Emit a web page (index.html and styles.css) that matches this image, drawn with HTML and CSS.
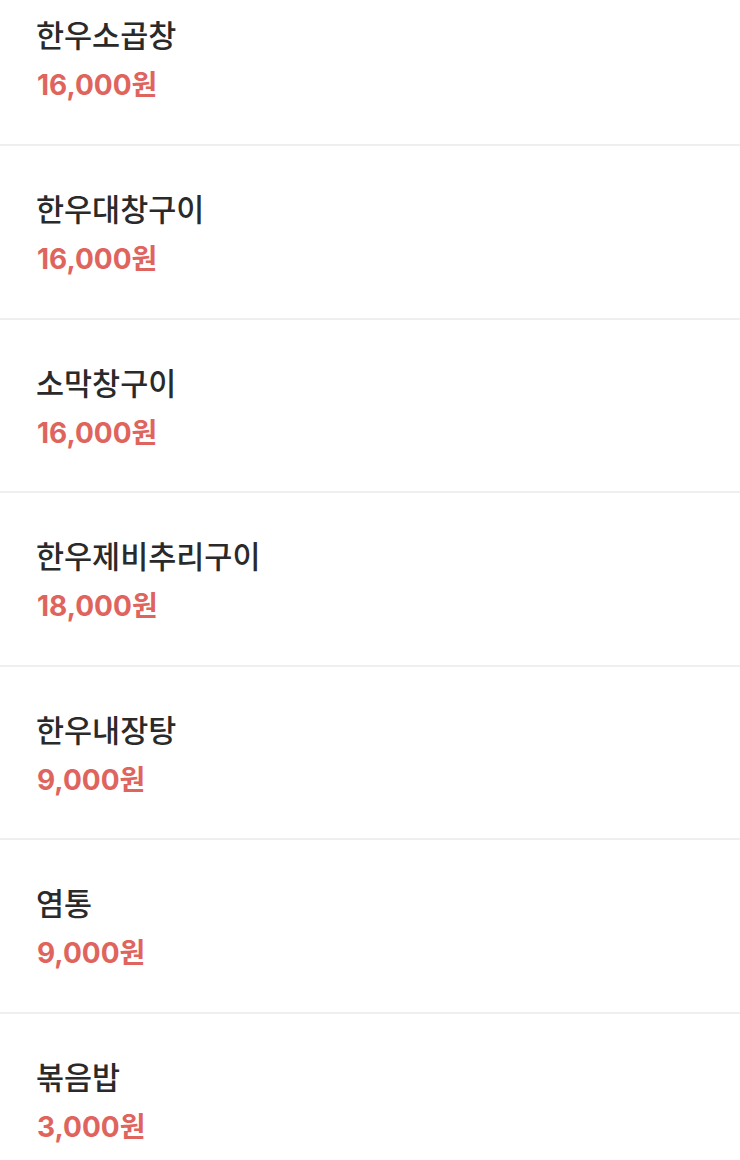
FILE: index.html
```html
<!DOCTYPE html>
<html lang="ko">
<head>
<meta charset="utf-8">
<title>메뉴</title>
<link rel="stylesheet" href="styles.css">
</head>
<body>
<ul class="menu-list">
  <li class="menu-item"><span class="menu-name">한우소곱창</span><span class="menu-price">16,000원</span></li>
  <li class="menu-item"><span class="menu-name">한우대창구이</span><span class="menu-price">16,000원</span></li>
  <li class="menu-item"><span class="menu-name">소막창구이</span><span class="menu-price">16,000원</span></li>
  <li class="menu-item"><span class="menu-name">한우제비추리구이</span><span class="menu-price">18,000원</span></li>
  <li class="menu-item"><span class="menu-name">한우내장탕</span><span class="menu-price">9,000원</span></li>
  <li class="menu-item"><span class="menu-name">염통</span><span class="menu-price">9,000원</span></li>
  <li class="menu-item"><span class="menu-name">볶음밥</span><span class="menu-price">3,000원</span></li>
</ul>
</body>
</html>
```
FILE: styles.css
```css
html, body {
  margin: 0;
  padding: 0;
  background: #ffffff;
  overflow: hidden;
}
body {
  font-family: "Noto Sans CJK KR", "Noto Sans", sans-serif;
}
.menu-list {
  list-style: none;
  margin: -27.6px 0 0 0;
  padding: 0;
}
.menu-item {
  box-sizing: border-box;
  height: 173.6px;
  padding: 44px 36px 0;
  border-bottom: 2px solid #efeff1;
  display: flex;
  flex-direction: column;
  gap: 15px;
}
.menu-name {
  font-size: 30.5px;
  line-height: 36px;
  font-weight: 500;
  color: #2a2a2a;
}
.menu-price {
  font-family: "Inter", "Noto Sans CJK KR", sans-serif;
  font-size: 28px;
  line-height: 36px;
  font-weight: 700;
  color: #e0645e;
  padding-left: 1px;
}
```
